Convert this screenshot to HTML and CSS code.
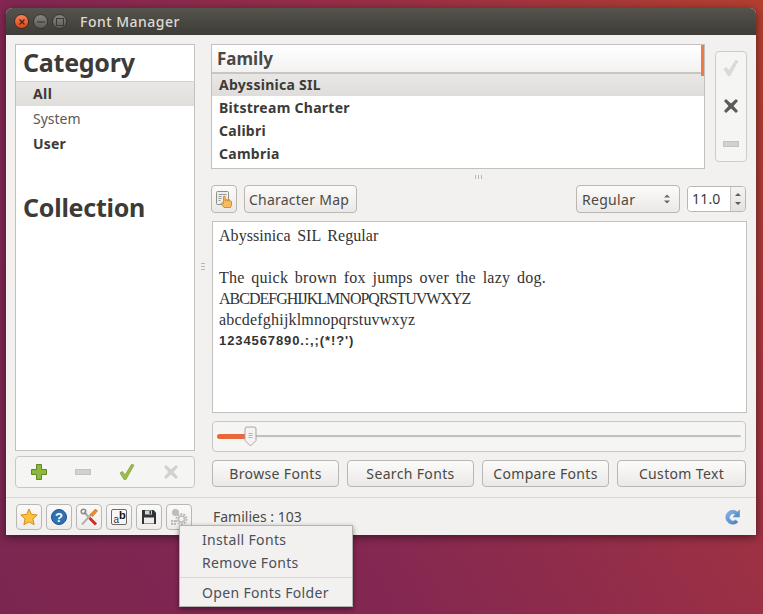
FILE: index.html
```html
<!DOCTYPE html>
<html lang="en">
<head>
<meta charset="utf-8">
<title>Font Manager</title>
<link rel="stylesheet" href="styles.css">
</head>
<body>
<div class="window">
  <header class="titlebar">
    <div class="wm">
      <span class="wm-btn close"><svg viewBox="0 0 8 8" width="8" height="8"><path d="M1.500 1.500l5 5M6.500 1.500l-5 5" stroke="#5a1c08" stroke-width="1.200"/></svg></span>
      <span class="wm-btn"><svg viewBox="0 0 8 8" width="8" height="8"><path d="M0 4h8" stroke="#3c3b37" stroke-width="1.200"/></svg></span>
      <span class="wm-btn"><svg viewBox="0 0 8 8" width="8" height="8"><rect x=".5" y=".5" width="7" height="7" fill="none" stroke="#3c3b37" stroke-width="1"/></svg></span>
    </div>
    <span class="title">Font Manager</span>
  </header>
  <div class="content">
    <aside class="left">
      <div class="sidebar">
        <h2 class="cat-head">Category</h2>
        <div class="cat-row sel">All</div>
        <div class="cat-row light">System</div>
        <div class="cat-row bold">User</div>
        <h2 class="coll-head">Collection</h2>
      </div>
      <div class="tool-strip">
        <svg viewBox="0 0 16 16" width="16" height="16"><path d="M5.500 .5h5v5h5v5h-5v5h-5v-5h-5v-5h5z" fill="#8fb63f" stroke="#5f8a1f"/></svg>
        <svg viewBox="0 0 16 16" width="16" height="16"><rect x=".5" y="5.500" width="15" height="5" fill="#d2d1cf" stroke="#c4c3c1"/></svg>
        <svg viewBox="0 0 16 16" width="16" height="16"><path d="M1 9l2.500-1.500L6 11 12.500 .5 15 1 7 15.500H5z" fill="#9cbb4b" stroke="#7f9f35" stroke-width=".7"/></svg>
        <svg viewBox="0 0 16 16" width="16" height="16"><path d="M3 1l5 4.500L13 1l2 2-4.500 5 4.500 5-2 2-5-4.500L3 15l-2-2 4.500-5L1 3z" fill="#d2d1cf"/></svg>
      </div>
    </aside>
    <div class="h-grip"></div>
    <main class="right">
      <div class="family-area">
        <div class="family-list">
          <div class="fam-head"><span>Family</span><i class="sort-mark"></i></div>
          <div class="fam-row sel">Abyssinica SIL</div>
          <div class="fam-row">Bitstream Charter</div>
          <div class="fam-row">Calibri</div>
          <div class="fam-row">Cambria</div>
        </div>
        <div class="side-strip">
          <svg viewBox="0 0 16 16" width="16" height="16"><path d="M1 9l2.500-1.500L6 11 12.500 .5 15 1 7 15.500H5z" fill="#dcdbd9" stroke="#d0cfcd" stroke-width=".6"/></svg>
          <svg viewBox="0 0 16 16" width="16" height="16"><path d="M3 1l5 4.500L13 1l2 2-4.500 5 4.500 5-2 2-5-4.500L3 15l-2-2 4.500-5L1 3z" fill="#5c5b58"/></svg>
          <svg viewBox="0 0 16 16" width="16" height="16"><rect x=".5" y="5.500" width="15" height="5" fill="#d2d1cf" stroke="#c4c3c1"/></svg>
        </div>
      </div>
      <div class="v-grip"></div>
      <div class="controls">
        <button class="btn square"><svg viewBox="0 0 18 18" width="18" height="18"><rect x="1.500" y="1.500" width="12" height="13" rx="1" fill="#eeeeec" stroke="#8d8f8a"/><path d="M3.500 4.500h8M3.500 6.500h3M3.500 8.500h3M3.500 10.500h2" stroke="#9a9c97"/><path d="M9 17.500L6 13.500l1-1 1.500 1V7a.9.9 0 0 1 1.800 0v4h.7v-.8a.8.8 0 0 1 1.600 0v.8h.6v-.6a.8.8 0 0 1 1.600 0v.8h.4a.8.8 0 0 1 1.300.6V15l-1 2.500z" fill="#f7bc62" stroke="#cf7d12" stroke-width=".8"/></svg></button>
        <button class="btn charmap">Character Map</button>
        <div class="spacer"></div>
        <div class="btn combo"><span>Regular</span><svg viewBox="0 0 8 12" width="8" height="12"><path d="M1 4.500L4 1.500 7 4.500zM1 7.500l3 3 3-3z" fill="#6b6a67"/></svg></div>
        <div class="spin"><span class="spin-val">11.0</span><span class="spin-arrows"><svg viewBox="0 0 8 22" width="8" height="22"><path d="M1 8l3-3 3 3zM1 14l3 3 3-3z" fill="#5c5b58"/></svg></span></div>
      </div>
      <div class="preview">
        <p class="pv-title">Abyssinica SIL Regular</p>
        <p class="pv-quick">The quick brown fox jumps over the lazy dog.</p>
        <p class="pv-alpha">ABCDEFGHIJKLMNOPQRSTUVWXYZ</p>
        <p class="pv-lower">abcdefghijklmnopqrstuvwxyz</p>
        <p class="pv-num">1234567890.:,;(*!?')</p>
      </div>
      <div class="slider-box">
        <div class="track"><div class="track-fill"></div></div>
        <svg class="thumb" viewBox="0 0 13 21" width="13" height="21"><path d="M1 3a2 2 0 0 1 2-2h7a2 2 0 0 1 2 2v11.500L6.500 20 1 14.500z" fill="#f4f3f2" stroke="#a8a6a3"/><path d="M4.500 7.500h4M4.500 9.500h4M4.500 11.500h4" stroke="#b5b3b0"/></svg>
      </div>
      <div class="actions">
        <button class="btn action">Browse Fonts</button>
        <button class="btn action">Search Fonts</button>
        <button class="btn action">Compare Fonts</button>
        <button class="btn action">Custom Text</button>
      </div>
    </main>
  </div>
  <footer class="statusbar">
    <div class="status-icons">
      <button class="btn sq-s"><svg viewBox="0 0 18 18" width="18" height="18"><path d="M9 1l2.400 5.400 5.800.6-4.300 3.900 1.200 5.800L9 13.800l-5.100 2.900 1.200-5.800L.8 7l5.800-.6z" fill="#fbc440" stroke="#d88a12"/></svg></button>
      <button class="btn sq-s"><svg viewBox="0 0 18 18" width="18" height="18"><circle cx="9" cy="9" r="7.500" fill="#2f71b5" stroke="#1c4f8a"/><text x="9" y="13.500" class="q">?</text></svg></button>
      <button class="btn sq-s"><svg viewBox="0 0 18 18" width="18" height="18"><path d="M4 4l6 6.500" stroke="#a9aaa6" stroke-width="2"/><path d="M9.500 10l6.500 6.500" stroke="#cc2e22" stroke-width="3"/><path d="M2 16.500L11 6.500" stroke="#b3b4b0" stroke-width="2"/><path d="M10 6.500L15.500 1l2 2-5 5.500z" fill="#f08a24" stroke="#c8680f" stroke-width=".6"/><circle cx="3.500" cy="3.500" r="2.300" fill="none" stroke="#8b8d88" stroke-width="1.500"/></svg></button>
      <button class="btn sq-s"><svg viewBox="0 0 18 18" width="18" height="18"><rect x="1.500" y="1.500" width="15" height="15" rx="1.500" fill="#f6f6f5" stroke="#6a6966"/><text x="3.500" y="14.500" class="ab-a">a</text><text x="9" y="10.500" class="ab-b">b</text></svg></button>
      <button class="btn sq-s"><svg viewBox="0 0 16 16" width="16" height="16"><path d="M1 1h11.500L15 3.500V15H1z" fill="#2e3436"/><rect x="4" y="1.500" width="7" height="4" fill="#d3d7cf"/><rect x="8.500" y="2" width="1.500" height="3" fill="#2e3436"/><rect x="3" y="8.500" width="10" height="6" fill="#eeeeec"/></svg></button>
      <button class="btn sq-s"><svg viewBox="0 0 18 18" width="18" height="18"><circle cx="11.500" cy="11" r="5" fill="none" stroke="#bdbcba" stroke-width="2" stroke-dasharray="2 1.100"/><circle cx="11.500" cy="11" r="3" fill="none" stroke="#bdbcba" stroke-width="1.500"/><circle cx="5.500" cy="4.500" r="3.500" fill="#bdbcba"/><path d="M1 12h5v5H1z" fill="#bdbcba"/><path d="M3.500 12v5M1 14.500h5" stroke="#f2f1f0" stroke-width=".7"/></svg></button>
    </div>
    <span class="families">Families : 103</span>
    <svg class="refresh" viewBox="0 0 16 16" width="16" height="16"><defs><linearGradient id="rf" x1="0" y1="0" x2="1" y2="1"><stop offset="0" stop-color="#8cb8e8"/><stop offset="1" stop-color="#3f78bd"/></linearGradient></defs><path d="M15.500 1v7H9l2.400-2.300A3.600 3.600 0 1 0 11.500 11L14 13A7 7 0 1 1 13.400 3z" fill="url(#rf)" stroke="#4f88cc" stroke-width=".5"/></svg>
  </footer>
</div>
<nav class="menu">
  <div class="menu-item">Install Fonts</div>
  <div class="menu-item">Remove Fonts</div>
  <div class="menu-sep"></div>
  <div class="menu-item">Open Fonts Folder</div>
</nav>
</body>
</html>
```
FILE: styles.css
```css
* { box-sizing: border-box; }
html, body { margin: 0; height: 100%; }
body {
  position: relative;
  width: 763px;
  height: 614px;
  overflow: hidden;
  font-family: "Noto Sans", sans-serif;
  font-size: 14px;
  color: #3c3b37;
  background: linear-gradient(60deg, #7b2650 0%, #832752 35%, #9a3045 68%, #b23f2f 100%);
}
.window {
  position: absolute;
  left: 6px;
  top: 8px;
  width: 750px;
  height: 527px;
  background: #f2f1f0;
  border-radius: 6px 6px 0 0;
  box-shadow: 0 2px 8px rgba(0,0,0,.5);
  display: flex;
  flex-direction: column;
}
.titlebar {
  height: 27px;
  flex: none;
  border-radius: 6px 6px 0 0;
  background: linear-gradient(#55534c, #3d3c37);
  display: flex;
  align-items: center;
  padding-left: 8px;
}
.wm { display: flex; gap: 4px; }
.wm-btn {
  width: 15px;
  height: 15px;
  border-radius: 50%;
  background: linear-gradient(#86847e, #5e5d58);
  border: 1px solid #35342f;
  display: flex;
  align-items: center;
  justify-content: center;
}
.close { background: linear-gradient(#f4845a, #d8481c); border-color: #44291c; }
.title {
  margin-left: 13px;
  font-size: 14px;
  font-weight: 500;
  color: #dfdbd2;
  letter-spacing: .5px;
}
.content {
  flex: 1;
  display: flex;
  padding: 9px 9px 0;
  gap: 16px;
  min-height: 0;
  position: relative;
}
.h-grip {
  position: absolute;
  left: 195px;
  top: 228px;
  width: 4px;
  height: 7px;
  background: repeating-linear-gradient(180deg, #b9b7b4 0 1px, transparent 1px 3px);
}
.left { width: 180px; flex: none; display: flex; flex-direction: column; gap: 5px; }
.sidebar {
  height: 407px;
  background: #fff;
  border: 1px solid #c3c1bd;
}
.cat-head, .coll-head {
  margin: 0;
  padding-left: 7px;
  font-size: 25px;
  font-weight: 700;
  line-height: 36px;
  color: #3c3b37;
  letter-spacing: -.25px;
}
.cat-head { height: 36px; line-height: 34px; }
.coll-head { margin-top: 33px; }
.cat-row { height: 25px; line-height: 25px; padding-left: 17px; font-size: 14px; color: #3c3b37; }
.cat-row.sel { font-weight: 700; line-height: 24px; letter-spacing: .4px; border-top: 1px solid #d5d3d0; background: linear-gradient(#e9e8e6, #dfdedb); }
.cat-row.light { font-weight: 400; color: #5a5955; }
.cat-row.bold { font-weight: 700; letter-spacing: .2px; }
.tool-strip {
  height: 32px;
  border: 1px solid #c9c7c3;
  border-radius: 4px;
  background: #f5f5f4;
  display: flex;
  align-items: center;
  justify-content: center;
  gap: 28px;
}
.right { flex: 1; min-width: 0; display: flex; flex-direction: column; }
.family-area { display: flex; gap: 10px; height: 125px; flex: none; }
.family-list { width: 494px; background: #fff; border: 1px solid #c3c1bd; }
.fam-head {
  height: 29px;
  padding-left: 5px;
  font-size: 17px;
  font-weight: 700;
  line-height: 28px;
  color: #4a4945;
  background: linear-gradient(#fff, #f3f2f1);
  border-bottom: 2px solid #c8c6c3;
  position: relative;
}
.sort-mark { position: absolute; right: 0; top: 0; width: 3px; height: 31px; background: #ef7a45; }
.fam-row { height: 23px; line-height: 23px; padding-left: 7px; font-size: 14px; font-weight: 700; color: #3c3b37; letter-spacing: .28px; }
.fam-row.sel { height: 22px; line-height: 21px; background: linear-gradient(#e9e8e6, #dedddb); }
.side-strip {
  width: 32px;
  height: 111px;
  margin-top: 7px;
  padding: 8px 0 9px;
  border: 1px solid #ccc;
  border-radius: 4px;
  background: #f5f5f4;
  display: flex;
  flex-direction: column;
  align-items: center;
  justify-content: space-between;
}
.v-grip { height: 16px; flex: none; position: relative; }
.v-grip::after {
  content: "";
  position: absolute;
  left: 264px;
  top: 6px;
  width: 7px;
  height: 4px;
  background: repeating-linear-gradient(90deg, #b9b7b4 0 1px, transparent 1px 3px);
}
.controls { display: flex; align-items: center; height: 28px; flex: none; gap: 7px; width: 535px; }
.btn {
  font: inherit;
  color: #4a4945;
  border: 1px solid #b9b7b3;
  border-radius: 4px;
  background: linear-gradient(#fbfbfa, #ebe9e7);
  padding: 0;
  display: flex;
  align-items: center;
  justify-content: center;
}
.square { width: 26px; height: 28px; }
.charmap { width: 113px; height: 28px; letter-spacing: .25px; padding-right: 3px; }
.spacer { flex: 1; }
.combo { width: 104px; height: 28px; justify-content: space-between; padding: 0 8px 0 5px; color: #4a4945; letter-spacing: .3px; }
.spin { width: 59px; height: 26px; display: flex; border: 1px solid #b9b7b3; border-radius: 4px; overflow: hidden; }
.spin-val { width: 43px; background: #fff; line-height: 24px; padding-left: 4px; border-right: 1px solid #c9c7c3; letter-spacing: .2px; }
.spin-arrows { flex: 1; display: flex; align-items: center; justify-content: center; background: linear-gradient(#f5f4f3, #e3e2e0); }
.preview {
  margin-top: 8px;
  margin-left: 1px;
  width: 535px;
  height: 192px;
  flex: none;
  background: #fff;
  border: 1px solid #c3c1bd;
  padding: 3px 6px;
  font-family: "Liberation Serif", serif;
  font-size: 16px;
  color: #333;
}
.preview p { margin: 0; line-height: 21px; white-space: nowrap; }
.preview .pv-title { margin-bottom: 21px; word-spacing: 2.500px; letter-spacing: .05px; }
.pv-quick { word-spacing: 2.400px; letter-spacing: .26px; }
.pv-alpha { letter-spacing: -1px; }
.pv-lower { letter-spacing: .2px; }
.pv-num { font-family: "Liberation Sans", sans-serif; font-size: 13px; font-weight: 700; letter-spacing: .9px; }
.slider-box {
  margin-top: 8px;
  margin-left: 1px;
  width: 534px;
  height: 31px;
  flex: none;
  position: relative;
  border: 1px solid #c9c7c3;
  border-radius: 4px;
  background: #f5f5f4;
  display: flex;
  align-items: center;
  padding: 0 4px;
}
.track { flex: 1; height: 3px; background: #c3c1bd; border-bottom: 1px solid #eee; position: relative; border-radius: 2px; }
.track-fill { position: absolute; left: 0; top: -1px; width: 32px; height: 5px; border-radius: 3px; background: #e8683a; }
.thumb { position: absolute; left: 31px; top: 4px; }
.actions { display: flex; gap: 8px; margin-top: 8px; margin-left: 1px; width: 534px; }
.action { flex: none; width: 127px; height: 27px; letter-spacing: .35px; }
.action:last-child { flex: 1; }
.statusbar {
  height: 38px;
  flex: none;
  border-top: 1px solid #dcdad7;
  display: flex;
  align-items: center;
  padding: 1px 16px 0 10px;
}
.status-icons { display: flex; gap: 4px; }
.sq-s { width: 26px; height: 26px; background: linear-gradient(#fafafa, #eeedeb); }
.families { margin-left: 21px; margin-bottom: 2px; flex: 1; color: #4a4945; }
.q { font: 700 13px "Liberation Sans", sans-serif; fill: #fff; text-anchor: middle; }
.ab-a { font: 400 10px "Liberation Sans", sans-serif; fill: #333; }
.ab-b { font: 700 11px "Liberation Sans", sans-serif; fill: #111; }
.menu {
  position: absolute;
  left: 179px;
  top: 525px;
  width: 174px;
  height: 82px;
  background: #f2f1f0;
  border: 1px solid #b5b3af;
  box-shadow: 0 2px 5px rgba(0,0,0,.45);
  padding-top: 2px;
}
.menu-item { height: 23px; line-height: 23px; padding-left: 22px; font-size: 14px; color: #4a4f5a; letter-spacing: .33px; }
.menu-sep { height: 1px; background: #d9d7d4; margin: 3px 0; }
```
